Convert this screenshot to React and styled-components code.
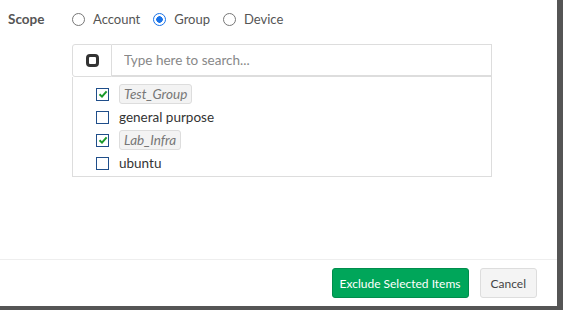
import React, { useState } from 'react';
import styled, { createGlobalStyle } from 'styled-components';

const GlobalStyle = createGlobalStyle`
  html, body {
    margin: 0;
    padding: 0;
    background: #555555;
    font-family: Lato, "Liberation Sans", sans-serif;
  }
`;

const items = [
  { name: 'Test_Group', checked: true, tag: true },
  { name: 'general purpose', checked: false, tag: false },
  { name: 'Lab_Infra', checked: true, tag: true },
  { name: 'ubuntu', checked: false, tag: false }
];

const scopes = ['Account', 'Group', 'Device'];

export default function App() {
  const [scope, setScope] = useState('Group');
  const [rows, setRows] = useState(items);

  const toggle = (i) => {
    setRows(rows.map((r, j) => (j === i ? { ...r, checked: !r.checked } : r)));
  };

  return (
    <>
      <GlobalStyle />
      <Modal>
        <Body>
          <ScopeRow>
            <ScopeLabel>Scope</ScopeLabel>
            <Radios>
              {scopes.map((s) => (
                <RadioOpt key={s} onClick={() => setScope(s)}>
                  <RadioDot active={scope === s} />
                  {s}
                </RadioOpt>
              ))}
            </Radios>
          </ScopeRow>
          <Picker>
            <SearchRow>
              <ToggleBtn>
                <Square />
              </ToggleBtn>
              <SearchInput placeholder='Type here to search...' />
            </SearchRow>
            <List>
              {rows.map((r, i) => (
                <Item key={r.name} onClick={() => toggle(i)}>
                  <Check checked={r.checked}>
                    {r.checked && (
                      <svg width='10' height='10' viewBox='0 0 10 10'>
                        <path
                          d='M1.5 5.2 L4 7.6 L8.6 2.4'
                          fill='none'
                          stroke='#1a9a2a'
                          strokeWidth='2'
                        />
                      </svg>
                    )}
                  </Check>
                  {r.tag ? <Tag>{r.name}</Tag> : <Plain>{r.name}</Plain>}
                </Item>
              ))}
            </List>
          </Picker>
        </Body>
        <Footer>
          <PrimaryBtn>Exclude Selected Items</PrimaryBtn>
          <DefaultBtn>Cancel</DefaultBtn>
        </Footer>
      </Modal>
    </>
  );
}

const Modal = styled.div`
  width: 557px;
  height: 306px;
  background: #fff;
  display: flex;
  flex-direction: column;
`;

const Body = styled.div`
  flex: 1;
  padding: 9px 0 0 8px;
`;

const ScopeRow = styled.div`
  display: flex;
  align-items: center;
  height: 20px;
`;

const ScopeLabel = styled.div`
  width: 64px;
  font-size: 13.5px;
  font-weight: bold;
  color: #555;
`;

const Radios = styled.div`
  display: flex;
  gap: 13px;
`;

const RadioOpt = styled.label`
  display: flex;
  align-items: center;
  gap: 8px;
  font-size: 13px;
  color: #555;
  cursor: pointer;
`;

const RadioDot = styled.span`
  box-sizing: border-box;
  width: 13px;
  height: 13px;
  border-radius: 50%;
  border: 1px solid ${(p) => (p.active ? '#1a73e8' : '#777')};
  background: ${(p) =>
    p.active ? 'radial-gradient(circle, #1a73e8 0 3px, #fff 3.5px)' : '#fff'};
`;

const Picker = styled.div`
  margin: 15px 0 0 64px;
  width: 420px;
`;

const SearchRow = styled.div`
  display: flex;
  height: 33px;
`;

const ToggleBtn = styled.div`
  box-sizing: border-box;
  width: 40px;
  border: 1px solid #ddd;
  border-radius: 3px 0 0 3px;
  display: flex;
  align-items: center;
  justify-content: center;
`;

const Square = styled.span`
  box-sizing: border-box;
  width: 13px;
  height: 13px;
  border: 3px solid #333;
  border-radius: 4px;
`;

const SearchInput = styled.input`
  flex: 1;
  box-sizing: border-box;
  border: 1px solid #ddd;
  border-left: none;
  border-bottom-width: 2px;
  outline: none;
  padding: 0 12px;
  font: inherit;
  font-size: 13.5px;
  color: #555;
  &::placeholder {
    color: #888;
  }
`;

const List = styled.div`
  box-sizing: border-box;
  height: 100px;
  border: 1px solid #ddd;
  border-top: none;
  padding: 7px 0 0 23px;
  display: flex;
  flex-direction: column;
  gap: 3px;
`;

const Item = styled.div`
  display: flex;
  align-items: center;
  gap: 10px;
  height: 20px;
  cursor: pointer;
`;

const Check = styled.span`
  box-sizing: border-box;
  width: 13px;
  height: 13px;
  border: 1px solid #1f4e8a;
  background: #fff;
  display: flex;
  align-items: center;
  justify-content: center;
`;

const Tag = styled.span`
  box-sizing: border-box;
  height: 20px;
  line-height: 18px;
  padding: 0 4px;
  border: 1px solid #ddd;
  border-radius: 3px;
  background: #f3f3f3;
  font-size: 13.5px;
  font-style: italic;
  color: #777;
`;

const Plain = styled.span`
  font-size: 13.5px;
  color: #333;
`;

const Footer = styled.div`
  box-sizing: border-box;
  height: 47px;
  border-top: 1px solid #eee;
  display: flex;
  justify-content: flex-end;
  align-items: flex-start;
  gap: 11px;
  padding: 8px 20px 0 0;
`;

const Button = styled.button`
  height: 30px;
  box-sizing: border-box;
  border-radius: 3px;
  font-family: inherit;
  font-size: 12px;
  padding: 0 ${(p) => p.$pad || 10}px;
  cursor: pointer;
`;

const PrimaryBtn = styled(Button).attrs({ $pad: 7 })`
  background: #00a65a;
  border: 1px solid #008d4c;
  color: #fff;
`;

const DefaultBtn = styled(Button)`
  background: #f4f4f4;
  border: 1px solid #ddd;
  color: #444;
`;
